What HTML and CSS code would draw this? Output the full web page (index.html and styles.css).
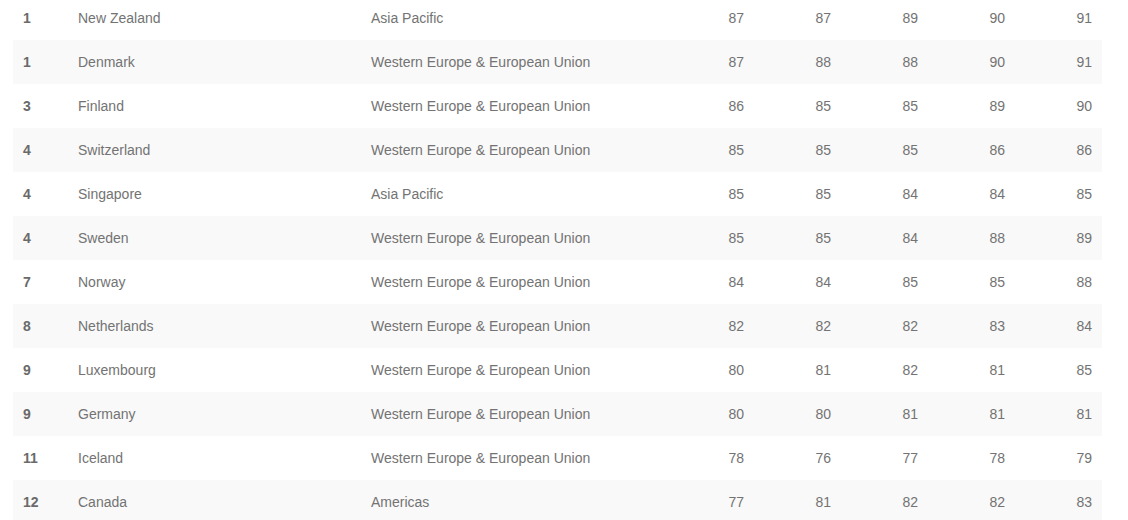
FILE: index.html
```html
<!DOCTYPE html>
<html lang="en">
<head>
<meta charset="utf-8">
<title>Rankings</title>
<link rel="stylesheet" href="styles.css">
</head>
<body>
<table class="rank-table">
  <colgroup>
    <col class="c-rank"><col class="c-country"><col class="c-region">
    <col class="c-num"><col class="c-num"><col class="c-num"><col class="c-num"><col class="c-num">
  </colgroup>
  <tbody>
    <tr><td class="rank">1</td><td>New Zealand</td><td>Asia Pacific</td><td class="num">87</td><td class="num">87</td><td class="num">89</td><td class="num">90</td><td class="num">91</td></tr>
    <tr><td class="rank">1</td><td>Denmark</td><td>Western Europe &amp; European Union</td><td class="num">87</td><td class="num">88</td><td class="num">88</td><td class="num">90</td><td class="num">91</td></tr>
    <tr><td class="rank">3</td><td>Finland</td><td>Western Europe &amp; European Union</td><td class="num">86</td><td class="num">85</td><td class="num">85</td><td class="num">89</td><td class="num">90</td></tr>
    <tr><td class="rank">4</td><td>Switzerland</td><td>Western Europe &amp; European Union</td><td class="num">85</td><td class="num">85</td><td class="num">85</td><td class="num">86</td><td class="num">86</td></tr>
    <tr><td class="rank">4</td><td>Singapore</td><td>Asia Pacific</td><td class="num">85</td><td class="num">85</td><td class="num">84</td><td class="num">84</td><td class="num">85</td></tr>
    <tr><td class="rank">4</td><td>Sweden</td><td>Western Europe &amp; European Union</td><td class="num">85</td><td class="num">85</td><td class="num">84</td><td class="num">88</td><td class="num">89</td></tr>
    <tr><td class="rank">7</td><td>Norway</td><td>Western Europe &amp; European Union</td><td class="num">84</td><td class="num">84</td><td class="num">85</td><td class="num">85</td><td class="num">88</td></tr>
    <tr><td class="rank">8</td><td>Netherlands</td><td>Western Europe &amp; European Union</td><td class="num">82</td><td class="num">82</td><td class="num">82</td><td class="num">83</td><td class="num">84</td></tr>
    <tr><td class="rank">9</td><td>Luxembourg</td><td>Western Europe &amp; European Union</td><td class="num">80</td><td class="num">81</td><td class="num">82</td><td class="num">81</td><td class="num">85</td></tr>
    <tr><td class="rank">9</td><td>Germany</td><td>Western Europe &amp; European Union</td><td class="num">80</td><td class="num">80</td><td class="num">81</td><td class="num">81</td><td class="num">81</td></tr>
    <tr><td class="rank">11</td><td>Iceland</td><td>Western Europe &amp; European Union</td><td class="num">78</td><td class="num">76</td><td class="num">77</td><td class="num">78</td><td class="num">79</td></tr>
    <tr><td class="rank">12</td><td>Canada</td><td>Americas</td><td class="num">77</td><td class="num">81</td><td class="num">82</td><td class="num">82</td><td class="num">83</td></tr>
  </tbody>
</table>
</body>
</html>
```
FILE: styles.css
```css
html, body {
  margin: 0;
  padding: 0;
  background: #ffffff;
}
body {
  padding: 0 13px;
  overflow: hidden;
  font-family: "Liberation Sans", Arial, sans-serif;
  font-size: 14px;
  color: #737373;
}
.rank-table {
  margin-top: -4px;
  width: 1089px;
  border-collapse: collapse;
  table-layout: fixed;
}
.c-rank { width: 55px; }
.c-country { width: 293px; }
.c-region { width: 306px; }
.c-num { width: 87px; }
.rank-table td {
  height: 44px;
  padding: 0 10px;
  box-sizing: border-box;
  vertical-align: middle;
  white-space: nowrap;
  line-height: 16px;
}
.rank-table tr:nth-child(even) td {
  background: #f9f9f9;
}
.rank-table td.rank {
  font-weight: bold;
  color: #6a6a6a;
}
.rank-table td.num {
  text-align: right;
}
```
